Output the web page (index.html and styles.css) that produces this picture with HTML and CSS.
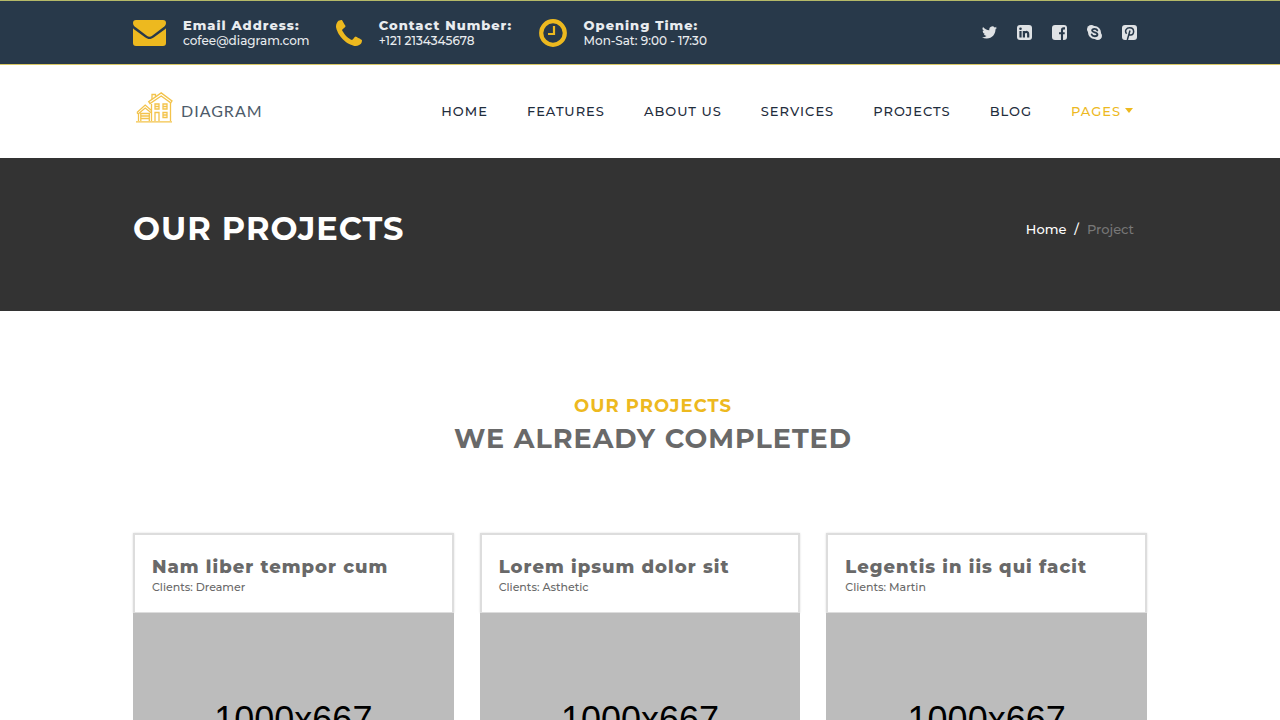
FILE: index.html
```html
<!DOCTYPE html>
<html lang="en">
<head>
  <meta charset="UTF-8">
  <meta name="viewport" content="width=device-width, initial-scale=1.0">
  <title>Diagram - Our Projects</title>
  <link rel="stylesheet" href="styles.css">
</head>
<body>
  <header>
    <div class="topbar">
      <div class="container topbar-inner">
        <div class="info">
          <svg width="33" height="26" viewBox="0 0 33 26" fill="currentColor" aria-hidden="true">
            <path d="M3 0h27a3 3 0 0 1 3 3c0 2-1.500 3.500-3 4.600L19.500 15.500c-2.200 1.700-3.800 1.700-6 0L3 7.600C1.500 6.500 0 5 0 3a3 3 0 0 1 3-3z"/>
            <path d="M0 8.200c.6.7 1.300 1.200 2 1.700l10 7.300c3.200 2.400 5.800 2.400 9 0l10-7.300c.7-.5 1.400-1 2-1.700V23a3 3 0 0 1-3 3H3a3 3 0 0 1-3-3z"/>
          </svg>
          <div class="info-text">
            <strong>Email Address:</strong>
            <span>cofee@diagram.com</span>
          </div>
        </div>
        <div class="info">
          <svg width="26" height="26" viewBox="0 0 1408 1408" fill="currentColor" aria-hidden="true">
            <path d="M1408 1112q0 27-10 70.500t-21 68.500q-21 50-122 106-94 51-186 51-27 0-53-3.500t-57.500-12.500-47-14.500-55.500-20.500-49-18q-98-35-175-83-127-79-264-216t-216-264q-48-77-83-175-3-9-18-49t-20.500-55.500-14.500-47-12.500-57.500-3.500-53q0-92 51-186 56-101 106-122 25-11 68.500-21t70.500-10q14 0 21 3 18 6 53 76 11 19 30 54t35 63.500 31 53.500q3 4 17.500 25t21.500 35.500 7 28.500q0 20-28.500 50t-62 55-62 53-28.500 46q0 9 5 22.500t8.500 20.500 14 24 11.500 19q76 137 174 235t235 174q2 1 19 11.500t24 14 20.500 8.500 22.500 5q18 0 46-28.500t53-62 55-62 50-28.500q14 0 28.500 7t35.500 21.500 25 17.500q25 15 53.500 31t63.500 35 54 30q70 35 76 53 3 7 3 21z"/>
          </svg>
          <div class="info-text">
            <strong>Contact Number:</strong>
            <span>+121 2134345678</span>
          </div>
        </div>
        <div class="info">
          <svg width="28" height="28" viewBox="0 0 28 28" fill="none" stroke="currentColor" aria-hidden="true">
            <circle cx="14" cy="14" r="11.800" stroke-width="4.200"/>
            <path d="M15 7v8H9" stroke-width="2.200"/>
          </svg>
          <div class="info-text">
            <strong>Opening Time:</strong>
            <span>Mon-Sat: 9:00 - 17:30</span>
          </div>
        </div>
        <div class="social">
          <a href="#" aria-label="Twitter">
            <svg width="15" height="15" viewBox="0 0 24 24" fill="currentColor"><path d="M23.950 4.570a10 10 0 0 1-2.820.770 4.960 4.960 0 0 0 2.160-2.720c-.950.550-2 .950-3.130 1.180a4.920 4.920 0 0 0-8.380 4.480C7.690 8.090 4.070 6.130 1.640 3.160a4.920 4.920 0 0 0 1.520 6.570 4.900 4.900 0 0 1-2.230-.61v.06a4.920 4.920 0 0 0 3.950 4.830 5 5 0 0 1-2.210.080 4.940 4.940 0 0 0 4.600 3.420A9.870 9.870 0 0 1 0 19.540a13.990 13.990 0 0 0 7.550 2.210c9.050 0 14-7.500 14-13.980 0-.21 0-.42-.02-.63a9.940 9.940 0 0 0 2.460-2.550z"/></svg>
          </a>
          <a href="#" aria-label="LinkedIn">
            <svg width="15" height="15" viewBox="0 0 15 15"><rect width="15" height="15" rx="3" fill="currentColor"/><g fill="none" stroke="#28394a" stroke-width="2.200"><path d="M3.500 6v6.500M6.900 12.500V6M6.900 9c0-2.500 4.300-2.900 4.300 0v3.500"/></g><circle cx="3.500" cy="3.800" r="1.300" fill="#28394a"/></svg>
          </a>
          <a href="#" aria-label="Facebook">
            <svg width="15" height="15" viewBox="0 0 15 15"><rect width="15" height="15" rx="3" fill="currentColor"/><path d="M13 3.400h-1.300c-1.300 0-1.700.6-1.700 1.700V15M7 8.300h5.700" fill="none" stroke="#28394a" stroke-width="2.100"/></svg>
          </a>
          <a href="#" aria-label="Skype">
            <svg width="15" height="15" viewBox="0 0 15 15"><g fill="currentColor"><circle cx="7.500" cy="7.500" r="6.500"/><circle cx="4.300" cy="4.300" r="4.300"/><circle cx="10.700" cy="10.700" r="4.300"/></g><path d="M10.300 5.400C9.500 3.300 5.200 3.300 5.100 5.500c0 2.300 5.300 1.500 5.300 4 0 2.300-4.900 2.400-5.700 0" fill="none" stroke="#28394a" stroke-width="1.900" stroke-linecap="round"/></svg>
          </a>
          <a href="#" aria-label="Pinterest">
            <svg width="15" height="15" viewBox="0 0 15 15"><rect width="15" height="15" rx="3" fill="currentColor"/><path d="M4.600 8.700C2.200 5.600 4.500 2.800 7.700 2.800c5.400 0 4.700 7.300 1.100 7.300-1 0-1.700-.6-1.800-1.300M8 5.500 5.300 15" fill="none" stroke="#28394a" stroke-width="1.500"/></svg>
          </a>
        </div>
      </div>
    </div>

    <div class="container navbar">
      <a href="#" class="logo">
        <svg width="37" height="31" viewBox="0 0 37 31" fill="none" stroke="#f3c34b" stroke-width="1.300" aria-hidden="true">
          <path d="M0 29.800h36M15.500 29V12M34.500 29V11"/>
          <path d="M14 11.500 12.700 9.700 25.200.900 36 9l-1.300 1.900L25.200 4z"/>
          <path d="M16 7V2.500h3.500v2.200"/>
          <path d="M1 20.500 9.200 13l6.300 5.500M1 20.500l1.200 1.400L9.200 16l6.300 5M2.500 22v7M4.800 29v-7.500h8.500V29M4.800 24h8.500M4.800 26.500h8.500"/>
          <path d="M19 12h4v5h-4zM27 12h4v5h-4zM27 20.500h4v5h-4zM19 29v-8.500h4V29M19 14.500h4M27 14.500h4M27 23h4"/>
        </svg>
        <span>DIAGRAM</span>
      </a>
      <nav>
        <a href="#">HOME</a>
        <a href="#">FEATURES</a>
        <a href="#">ABOUT US</a>
        <a href="#">SERVICES</a>
        <a href="#">PROJECTS</a>
        <a href="#">BLOG</a>
        <a href="#" class="active">PAGES<span class="caret"></span></a>
      </nav>
    </div>
  </header>

  <section class="banner">
    <div class="container banner-inner">
      <h1>OUR PROJECTS</h1>
      <div class="breadcrumb">
        <a href="#">Home</a>
        <span>/</span>
        <span class="current">Project</span>
      </div>
    </div>
  </section>

  <main class="container projects">
    <div class="heading">
      <h3>OUR PROJECTS</h3>
      <h2>WE ALREADY COMPLETED</h2>
    </div>
    <div class="project-list">
      <article>
        <div class="project-title">
          <h4>Nam liber tempor cum</h4>
          <p>Clients: Dreamer</p>
        </div>
        <div class="project-image">1000x667</div>
      </article>
      <article>
        <div class="project-title">
          <h4>Lorem ipsum dolor sit</h4>
          <p>Clients: Asthetic</p>
        </div>
        <div class="project-image">1000x667</div>
      </article>
      <article>
        <div class="project-title">
          <h4>Legentis in iis qui facit</h4>
          <p>Clients: Martin</p>
        </div>
        <div class="project-image">1000x667</div>
      </article>
    </div>
  </main>
</body>
</html>
```
FILE: styles.css
```css
* {
  box-sizing: border-box;
}
body {
  margin: 0;
  font-family: Montserrat, Inter, sans-serif;
  font-size: 13px;
  line-height: 16px;
  color: #696969;
  background-color: #fff;
}
h1, h2, h3, h4, p {
  margin: 0;
}
h1, h2, h3, h4, strong, nav {
  letter-spacing: 1px;
}
a {
  color: inherit;
  text-decoration: none;
}
svg {
  display: block;
  flex-shrink: 0;
}
.container {
  width: 100%;
  max-width: 1040px;
  margin: 0 auto;
  padding: 0 13px;
}

/* top bar */
.topbar {
  background-color: #28394a;
  border-top: 1px solid #b5b968;
  border-bottom: 1px solid #d9c763;
}
.topbar-inner {
  display: flex;
  align-items: center;
  height: 63px;
}
.info {
  display: flex;
  align-items: center;
  gap: 17px;
  flex: 0 0 20%;
  color: #edb91f;
  white-space: nowrap;
}
.info-text {
  display: flex;
  flex-direction: column;
  font-size: 12px;
  font-weight: 500;
  color: #e9ecef;
}
.info-text strong {
  font-size: 13px;
  font-weight: 800;
}
.social {
  display: flex;
  margin-left: auto;
  color: #dfe2e5;
}
.social a {
  padding: 10px;
}

/* navigation */
.navbar {
  display: flex;
  align-items: center;
  justify-content: space-between;
  height: 93px;
}
.logo {
  display: flex;
  align-items: flex-end;
  gap: 8px;
  padding: 0 0 8px 3px;
  font-family: Lato, sans-serif;
  font-size: 16px;
  line-height: 24px;
  letter-spacing: 1px;
  color: #4d5b6a;
}
nav {
  display: flex;
  gap: 39px;
  padding: 0 14px 2px 0;
  font-weight: 500;
  color: #1f2d3d;
}
.active {
  display: flex;
  align-items: center;
  gap: 4px;
  color: #edb91f;
}
.caret {
  border: 4px solid transparent;
  border-top: 5px solid #edb91f;
  border-bottom: 0;
}

/* banner */
.banner {
  padding: 49px 0 61px;
  background-color: #333;
  color: #fff;
}
.banner-inner {
  display: flex;
  align-items: center;
  justify-content: space-between;
}
h1 {
  font-size: 32px;
  line-height: 43px;
}
.breadcrumb {
  display: flex;
  gap: 8px;
  padding-right: 13px;
  font-weight: 500;
}
.current {
  color: #777;
}

/* projects */
.projects {
  padding-top: 81px;
  padding-bottom: 80px;
}
.heading {
  padding-left: 26px;
  margin-bottom: 75px;
  text-align: center;
}
.heading h3 {
  font-size: 18px;
  line-height: 28px;
  color: #edb91f;
}
.heading h2 {
  font-size: 27px;
  line-height: 38px;
}
.project-list {
  display: grid;
  grid-template-columns: repeat(3, 1fr);
  gap: 26px;
}
.project-title {
  padding: 20px 17px 18px;
  border: 2px solid #ddd;
  border-bottom-width: 1px;
  box-shadow: 0 0 2px #ddd;
}
.project-title h4 {
  font-size: 18px;
  font-weight: 800;
  line-height: 25px;
}
.project-title p {
  font-size: 11px;
  font-weight: 500;
  line-height: 14px;
}
.project-image {
  display: flex;
  align-items: center;
  justify-content: center;
  aspect-ratio: 1000 / 667;
  background-color: #bcbcbc;
  color: #000;
  font-family: "Liberation Sans", sans-serif;
  font-size: 36px;
}
```
